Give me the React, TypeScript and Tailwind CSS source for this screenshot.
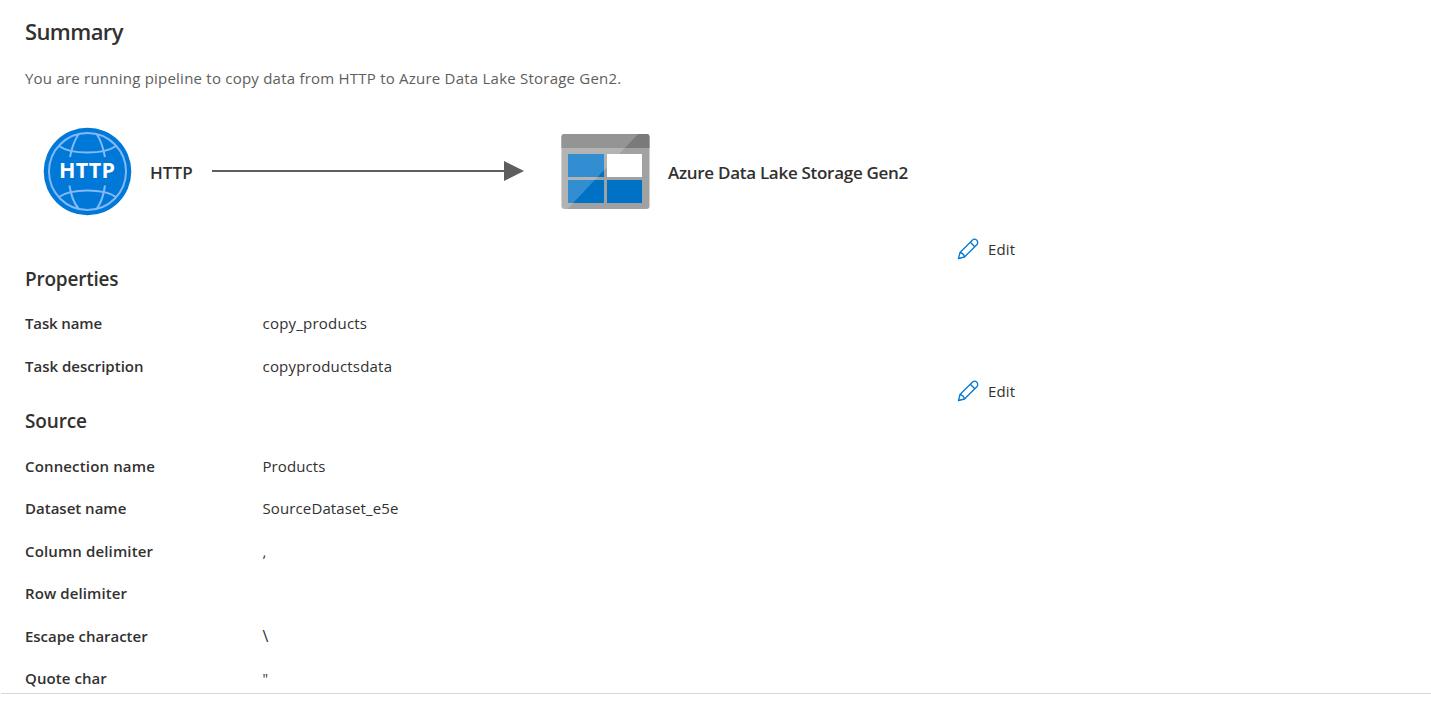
type Row = { label: string; value: string; labelClass: string; valueClass: string };

const properties: Row[] = [
  { label: "Task name", value: "copy_products", labelClass: "tracking-[-0.12px]", valueClass: "tracking-[0.22px]" },
  { label: "Task description", value: "copyproductsdata", labelClass: "", valueClass: "tracking-[0.2px]" },
];

const source: Row[] = [
  { label: "Connection name", value: "Products", labelClass: "tracking-[0.15px]", valueClass: "tracking-[0.1px]" },
  { label: "Dataset name", value: "SourceDataset_e5e", labelClass: "", valueClass: "tracking-[0.12px]" },
  { label: "Column delimiter", value: ",", labelClass: "tracking-[0.13px]", valueClass: "" },
  { label: "Row delimiter", value: "", labelClass: "tracking-[0.1px]", valueClass: "" },
  { label: "Escape character", value: "\\", labelClass: "tracking-[-0.03px]", valueClass: "text-[16px]" },
  { label: "Quote char", value: '"', labelClass: "tracking-[0.08px]", valueClass: "text-[14px]" },
];

function HttpIcon() {
  return (
    <svg width="88" height="88" viewBox="0 0 88 88" className="block overflow-visible">
      <circle cx="43.500" cy="43.500" r="43.800" fill="#0078d7" />
      <g fill="none" stroke="#83b9f9" strokeWidth="2">
        <circle cx="43.500" cy="43.500" r="38.500" />
        <path d="M15 18Q24 24.500 43.500 24.500T72 18M15 69Q24 62.500 43.500 62.500T72 69" />
        <path d="M34.500 6.500Q29 14 26 29M53 6.500Q58 14 61 29M25.500 57.500Q27.500 72 34.500 80.500M61 57.500Q59 72 53 80.500" />
      </g>
      <text x="43" y="50" textAnchor="middle" textLength="56" fill="#fff" fontFamily="Open Sans" fontWeight="700" fontSize="21.500">HTTP</text>
    </svg>
  );
}

function StorageIcon() {
  return (
    <svg width="88" height="76" viewBox="0 0 88 76" className="ml-[37.500px] block overflow-visible">
      <g transform="translate(-.5 0)">
        <rect x="0" y="0" width="88" height="75" rx="3" fill="#a0a1a2" />
        <path d="M0 14V3a3 3 0 0 1 3-3h82a3 3 0 0 1 3 3v11z" fill="#7a7a7a" />
        <path d="M6.500 20h36v23h-36zM6.500 46h36v23h-36zM45.500 46h35v23h-35z" fill="#0072c6" />
        <path d="M45.500 20h35v23h-35z" fill="#fff" />
        <path d="M3 0H76.500L6 75H3a3 3 0 0 1-3-3V3a3 3 0 0 1 3-3z" fill="#fff" fillOpacity=".2" />
      </g>
    </svg>
  );
}

function Pencil() {
  return (
    <svg width="22" height="22" viewBox="0 0 22 22" className="block" fill="none" stroke="#0078d4" strokeWidth="1.300" strokeLinejoin="round">
      <path d="M1.500 20.500L3 14.500 15.300 2.200a3.100 3.100 0 0 1 4.500 4.500L7.500 19z" />
      <path d="M13.300 4.200l4.500 4.500M3 14.500q3.700.8 4.500 4.500" />
    </svg>
  );
}

function Section({ title, titleClass, rows }: { title: string; titleClass: string; rows: Row[] }) {
  return (
    <section className="flex flex-col">
      <div className="flex h-5 items-center gap-[9px] pl-[932px]">
        <Pencil />
        <button className="text-[15px] tracking-[0.15px]">Edit</button>
      </div>
      <h2 className={"mt-[7px] h-[26px] w-max text-[19px] font-semibold leading-[26px] " + titleClass}>{title}</h2>
      <dl className="mt-[20.300px] flex flex-col gap-[20.500px]">
        {rows.map((r) => (
          <div key={r.label} className="flex h-[22px] text-[15px] leading-[22px]">
            <dt className="w-[237.500px] font-semibold">
              <span className={r.labelClass}>{r.label}</span>
            </dt>
            <dd>
              <span className={r.valueClass}>{r.value}</span>
            </dd>
          </div>
        ))}
      </dl>
    </section>
  );
}

export default function App() {
  return (
    <div className="flex h-[702px] flex-col bg-white pl-px font-['Open_Sans','Noto_Sans',sans-serif] text-[#323130]">
      <main className="flex h-[694px] flex-col overflow-hidden border-b border-[#d9d9d9] pl-6">
        <h1 className="mt-[15px] h-8 w-max text-[22px] font-semibold leading-8 tracking-[-0.6px]">Summary</h1>
        <p className="mt-5 h-[22px] w-max text-[15px] leading-[22px] tracking-[0.225px] text-[#605e5c]">
          You are running pipeline to copy data from HTTP to Azure Data Lake Storage Gen2.
        </p>
        <div className="mt-[39px] flex h-[88px] items-center pl-[19px]">
          <HttpIcon />
          <span className="ml-[18px] mt-px w-[43px] text-[17px] font-semibold tracking-[0.1px]">HTTP</span>
          <svg width="312" height="20" className="mb-[2px] ml-[19px] block">
            <path d="M0 9h292V0l20 10-20 10v-9H0z" fill="#605e5c" />
          </svg>
          <StorageIcon />
          <span className="ml-[18.500px] mt-px w-max text-[17px] font-semibold tracking-[-0.285px]">Azure Data Lake Storage Gen2</span>
        </div>
        <div className="mt-[23px] flex flex-col gap-[4.500px]">
          <Section title="Properties" titleClass="tracking-[-0.22px]" rows={properties} />
          <Section title="Source" titleClass="tracking-[-0.15px]" rows={source} />
        </div>
      </main>
    </div>
  );
}
